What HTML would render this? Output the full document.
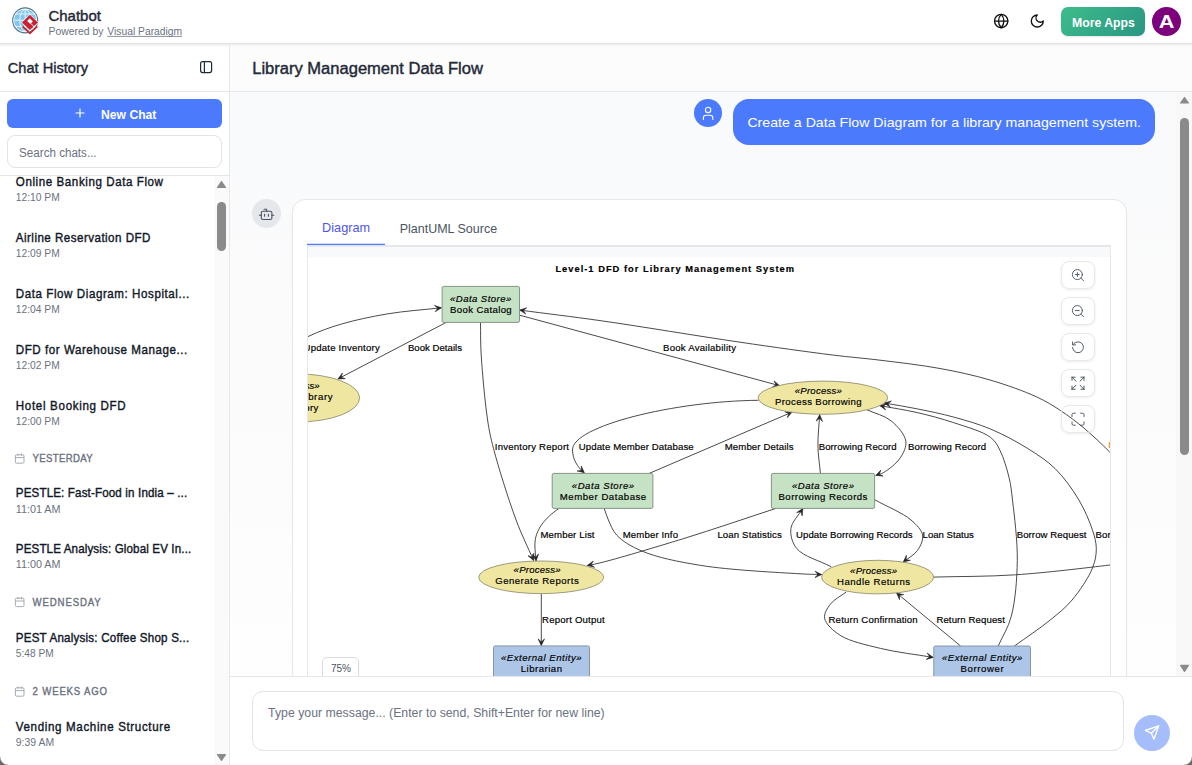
<!DOCTYPE html><html><head><meta charset="utf-8"><style>
html,body{margin:0;padding:0;}
body{width:1192px;height:765px;position:relative;overflow:hidden;background:#fff;font-family:"Liberation Sans", sans-serif;}
svg text{font-family:"Liberation Sans", sans-serif;}
</style></head><body>
<div style="position:absolute;left:0px;top:0px;width:1192px;height:43px;background:#fff;"></div>
<div style="position:absolute;left:0px;top:43px;width:1192px;height:1px;background:#e2e4e8;"></div>
<div style="position:absolute;left:0px;top:44px;width:1192px;height:3px;background:linear-gradient(#e9eaed,#f8f8f9 60%,#fcfcfd);"></div>
<div style="position:absolute;left:0px;top:47px;width:229px;height:718px;background:#fff;"></div>
<div style="position:absolute;left:229px;top:44px;width:1px;height:721px;background:#e5e7eb;"></div>
<div style="position:absolute;left:0px;top:91px;width:229px;height:1px;background:#e5e7eb;"></div>
<div style="position:absolute;left:7px;top:99px;width:215px;height:29px;background:#4b7bfc;border-radius:6px;"></div>
<div style="position:absolute;left:7px;top:135px;width:215px;height:33px;box-sizing:border-box;border:1px solid #e2e4e8;border-radius:8px;background:#fff;"></div>
<div style="position:absolute;left:0px;top:175px;width:229px;height:1px;background:#e5e7eb;"></div>
<div style="position:absolute;left:214px;top:176px;width:15px;height:589px;background:#fafafa;"></div>
<div style="position:absolute;left:217px;top:202px;width:9px;height:49px;background:#8a8a8a;border-radius:4.5px;"></div>
<div style="position:absolute;left:230px;top:47px;width:962px;height:44px;background:#fcfcfd;"></div>
<div style="position:absolute;left:230px;top:91px;width:962px;height:1px;background:#e5e7eb;"></div>
<div style="position:absolute;left:230px;top:92px;width:962px;height:584px;background:linear-gradient(180deg,#f9fafb 0%,#fbfbfc 50%,#fefefe 100%);"></div>
<div style="position:absolute;left:1176px;top:92px;width:16px;height:584px;background:#f8f8f8;"></div>
<div style="position:absolute;left:1180px;top:118px;width:9px;height:337px;background:#8a8a8a;border-radius:4.5px;"></div>
<div style="position:absolute;left:0;top:0;width:1192px;height:765px;clip-path:inset(92px 16px 89px 230px);">
<div style="position:absolute;left:694px;top:99px;width:28px;height:28px;background:#4b7bfc;border-radius:50%;"></div>
<div style="position:absolute;left:733px;top:99px;width:422px;height:46px;background:#4b7bfc;border-radius:16px;"></div>
<div style="position:absolute;left:252px;top:199px;width:29px;height:29px;background:#e5e7eb;border-radius:50%;"></div>
<div style="position:absolute;left:292px;top:199px;width:835px;height:560px;box-sizing:border-box;background:#fff;border:1px solid #e5e7eb;border-radius:13px;box-shadow:0 1px 2px rgba(0,0,0,0.03);"></div>
<div style="position:absolute;left:307px;top:245px;width:804px;height:500px;box-sizing:border-box;background:#fff;border:1px solid #e5e7eb;border-top:2px solid #e5e7eb;"></div>
<div style="position:absolute;left:308px;top:247px;width:802px;height:10px;background:#f8f9fb;"></div>
<div style="position:absolute;left:307px;top:244px;width:78px;height:1px;background:#4b7bfc;box-shadow:0 -0.5px 0 rgba(75,123,252,0.5);"></div>
</div>
<div style="position:absolute;left:230px;top:676px;width:962px;height:1px;background:#e5e7eb;"></div>
<div style="position:absolute;left:230px;top:677px;width:962px;height:88px;background:#fff;"></div>
<div style="position:absolute;left:252px;top:691px;width:872px;height:60px;box-sizing:border-box;border:1px solid #e2e4e8;border-radius:11px;background:#fff;"></div>
<div style="position:absolute;left:1134px;top:715px;width:36px;height:36px;background:#a5bdfb;border-radius:50%;"></div>
<div style="position:absolute;left:1061px;top:7px;width:84px;height:29px;background:linear-gradient(135deg,#3dbd8a,#2b9584);border-radius:7px;box-shadow:0 1px 2px rgba(0,0,0,0.1);"></div>
<div style="position:absolute;left:1152px;top:7px;width:29px;height:29px;background:#7d007d;border-radius:50%;"></div>
<svg style="position:absolute;left:0;top:0" width="1192" height="765" viewBox="0 0 1192 765">
<defs><clipPath id="dc"><rect x="308" y="257" width="802" height="419"/></clipPath></defs>
<g clip-path="url(#dc)">
<path d="M260.0,365.0 C275.9,355.6 292.9,343.8 307.7,336.7 C319.7,331.0 329.3,327.6 341.6,324.0 C355.6,319.9 371.4,316.6 387.4,313.9 C404.6,311.0 423.4,309.8 441.4,307.8" fill="none" stroke="#2b2b2b" stroke-width="0.85"/><polygon points="441.4,307.8 435.2,311.7 437.8,308.2 434.5,305.4" fill="#222" stroke="#222" stroke-width="0.6"/><path d="M446.0,322.5 L338.0,378.9" fill="none" stroke="#2b2b2b" stroke-width="0.85"/><polygon points="338.0,378.9 342.4,373.0 341.2,377.2 345.3,378.7" fill="#222" stroke="#222" stroke-width="0.6"/><path d="M519.7,315.2 L779.6,385.7" fill="none" stroke="#2b2b2b" stroke-width="0.85"/><polygon points="779.6,385.7 772.4,387.1 776.1,384.8 774.1,380.9" fill="#222" stroke="#222" stroke-width="0.6"/><path d="M1125.0,468.0 C1119.8,462.6 1115.4,457.6 1109.5,451.8 C1102.2,444.6 1092.7,435.4 1084.2,428.3 C1076.4,421.8 1068.6,415.9 1060.6,410.6 C1052.9,405.5 1046.5,401.5 1037.1,397.1 C1024.3,391.2 1006.1,384.7 990.0,380.0 C973.7,375.2 957.5,371.7 940.0,368.5 C921.0,365.0 898.8,362.5 880.0,360.2 C863.3,358.1 851.0,357.3 832.6,355.0 C806.8,351.8 774.0,347.2 740.0,342.2 C698.1,336.1 640.3,326.3 600.0,320.6 C569.6,316.3 546.5,313.6 519.7,310.1" fill="none" stroke="#2b2b2b" stroke-width="0.85"/><polygon points="519.7,310.1 526.7,307.8 523.3,310.6 525.8,314.1" fill="#222" stroke="#222" stroke-width="0.6"/><path d="M758.4,400.3 C675,401 572,426 572.5,450 C572.7,459 577,467 584.3,472.7" fill="none" stroke="#2b2b2b" stroke-width="0.85"/><polygon points="584.3,472.7 577.2,470.9 581.5,470.4 581.3,466.0" fill="#222" stroke="#222" stroke-width="0.6"/><path d="M649.2,473.4 L792.1,412.1" fill="none" stroke="#2b2b2b" stroke-width="0.85"/><polygon points="792.1,412.1 787.3,417.6 788.8,413.5 784.8,411.8" fill="#222" stroke="#222" stroke-width="0.6"/><path d="M820.4,473.4 C819.6,463.9 818.0,454.6 817.9,445.0 C817.8,435.1 819.1,424.8 819.7,414.7" fill="none" stroke="#2b2b2b" stroke-width="0.85"/><polygon points="819.7,414.7 822.5,421.5 819.5,418.3 816.1,421.1" fill="#222" stroke="#222" stroke-width="0.6"/><path d="M866.7,409.7 C874.8,413.4 884.5,415.4 891.1,420.8 C897.5,426.0 904.8,434.4 905.8,441.1 C906.7,446.7 903.6,452.8 900.3,457.8 C896.6,463.4 888.5,469.7 883.7,472.5 C880.8,474.2 878.4,474.4 875.8,475.4" fill="none" stroke="#2b2b2b" stroke-width="0.85"/><polygon points="875.8,475.4 880.9,470.1 879.2,474.2 883.1,476.1" fill="#222" stroke="#222" stroke-width="0.6"/><path d="M998.2,646.0 C1002.6,636.1 1008.2,628.0 1011.3,616.2 C1015.4,600.8 1017.0,579.4 1017.3,560.4 C1017.6,540.7 1014.2,515.1 1012.5,500.0 C1011.4,490.9 1011.0,485.7 1009.2,478.1 C1007.1,469.3 1003.7,457.7 1000.0,450.4 C997.3,445.0 995.6,441.3 990.7,437.5 C982.9,431.4 966.2,426.9 953.8,422.7 C941.6,418.6 929.3,415.4 916.9,412.5 C904.6,409.7 892.1,407.9 879.7,405.6" fill="none" stroke="#2b2b2b" stroke-width="0.85"/><polygon points="879.7,405.6 886.8,403.7 883.2,406.3 885.6,409.9" fill="#222" stroke="#222" stroke-width="0.6"/><path d="M1014.4,646.0 C1026.3,637.4 1039.7,628.6 1050.0,620.2 C1058.5,613.3 1065.4,608.0 1072.1,600.0 C1079.7,591.0 1088.6,577.7 1092.5,568.0 C1095.3,560.9 1096.4,554.7 1096.3,548.3 C1096.2,542.1 1094.7,536.9 1092.5,530.2 C1089.6,521.3 1084.7,509.8 1078.9,500.0 C1072.6,489.3 1064.2,477.6 1055.3,468.8 C1047.0,460.6 1037.8,454.8 1027.7,448.5 C1016.5,441.5 1003.3,434.4 990.7,429.1 C978.6,424.0 966.2,420.5 953.8,417.1 C941.6,413.7 928.8,411.2 916.9,408.8 C905.7,406.5 895.2,404.9 884.3,403.0" fill="none" stroke="#2b2b2b" stroke-width="0.85"/><polygon points="884.3,403.0 891.4,401.0 887.8,403.6 890.2,407.3" fill="#222" stroke="#222" stroke-width="0.6"/><path d="M558.8,508.6 C545,518 534.8,530 534.9,545 C535,551 535.6,556 536.1,560.8" fill="none" stroke="#2b2b2b" stroke-width="0.85"/><polygon points="536.1,560.8 532.2,554.6 535.7,557.2 538.6,553.9" fill="#222" stroke="#222" stroke-width="0.6"/><path d="M480.5,322.4 C480.7,333.3 480.4,342.3 481.2,355.0 C482.3,373.0 485.0,402.8 487.6,420.0 C489.3,431.5 490.5,436.9 493.5,448.5 C498.3,467.0 508.5,499.7 516.1,520.0 C521.9,535.6 527.8,547.0 533.6,560.5" fill="none" stroke="#2b2b2b" stroke-width="0.85"/><polygon points="533.6,560.5 528.0,555.7 532.2,557.2 533.9,553.2" fill="#222" stroke="#222" stroke-width="0.6"/><path d="M776.0,508.4 C745.3,518.4 714.0,529.2 683.9,538.5 C655.4,547.3 615.7,559.1 600.0,562.9 C594.0,564.4 591.6,564.6 587.4,565.4" fill="none" stroke="#2b2b2b" stroke-width="0.85"/><polygon points="587.4,565.4 593.3,561.0 590.9,564.7 594.5,567.3" fill="#222" stroke="#222" stroke-width="0.6"/><path d="M604.2,508.4 C605.6,512.3 606.6,515.9 608.4,520.0 C610.6,524.8 612.4,530.6 616.8,535.2 C622.5,541.3 631.4,546.6 642.0,551.1 C657.1,557.5 678.4,561.8 700.7,565.4 C729.3,570.1 778.9,572.5 800.0,573.8 C809.8,574.4 814.4,574.3 821.6,574.6" fill="none" stroke="#2b2b2b" stroke-width="0.85"/><polygon points="821.6,574.6 814.9,577.6 818.0,574.5 815.1,571.2" fill="#222" stroke="#222" stroke-width="0.6"/><path d="M831.2,566.7 C819.7,560.7 803.2,556.4 796.8,548.6 C792.1,542.9 790.1,535.0 790.9,528.5 C791.8,521.7 798.8,515.2 802.8,508.6" fill="none" stroke="#2b2b2b" stroke-width="0.85"/><polygon points="802.8,508.6 802.2,515.9 801.0,511.7 796.7,512.6" fill="#222" stroke="#222" stroke-width="0.6"/><path d="M874.6,499.7 C886.7,506.5 902.7,512.8 911.0,520.0 C916.6,524.9 921.7,529.9 922.6,535.2 C923.4,540.0 920.6,545.9 917.6,550.3 C914.4,555.0 908.1,558.1 903.3,562.0" fill="none" stroke="#2b2b2b" stroke-width="0.85"/><polygon points="903.3,562.0 906.4,555.3 906.1,559.7 910.4,560.3" fill="#222" stroke="#222" stroke-width="0.6"/><path d="M541.3,593.6 L541.3,645.5" fill="none" stroke="#2b2b2b" stroke-width="0.85"/><polygon points="541.3,645.5 538.1,638.9 541.3,641.9 544.5,638.9" fill="#222" stroke="#222" stroke-width="0.6"/><path d="M846.2,592.0 C841.0,596.0 834.1,599.3 830.5,604.0 C827.3,608.2 823.8,613.5 824.6,618.2 C825.6,624.0 833.0,630.7 840.2,635.3 C850.0,641.6 866.0,644.8 880.5,648.4 C896.8,652.4 915.6,654.4 933.2,657.4" fill="none" stroke="#2b2b2b" stroke-width="0.85"/><polygon points="933.2,657.4 926.2,659.4 929.7,656.8 927.2,653.1" fill="#222" stroke="#222" stroke-width="0.6"/><path d="M960.6,646.0 L896.6,593.0" fill="none" stroke="#2b2b2b" stroke-width="0.85"/><polygon points="896.6,593.0 903.7,594.7 899.4,595.3 899.6,599.7" fill="#222" stroke="#222" stroke-width="0.6"/><path d="M933.5,577.1 C960.8,576.3 987.2,576.7 1015.5,574.8 C1045.9,572.8 1087.3,567.7 1110.0,565.0 C1122.8,563.5 1130.0,562.3 1140.0,561.0" fill="none" stroke="#2b2b2b" stroke-width="0.85"/>
<rect x="442.1" y="286.4" width="77.4" height="36" rx="1.6" fill="#c5e2c4" stroke="#7c8a7d" stroke-width="0.9"/>
<ellipse cx="297" cy="397.95" rx="62.6" ry="24.1" fill="#efe7a1" stroke="#86846c" stroke-width="0.8"/>
<ellipse cx="822.9" cy="397.7" rx="64.8" ry="16.6" fill="#efe7a1" stroke="#86846c" stroke-width="0.8"/>
<rect x="552.2" y="473.4" width="100.7" height="35" rx="1.6" fill="#c5e2c4" stroke="#7c8a7d" stroke-width="0.9"/>
<rect x="771.4" y="473.4" width="103.2" height="35" rx="1.6" fill="#c5e2c4" stroke="#7c8a7d" stroke-width="0.9"/>
<ellipse cx="541.2" cy="577.3" rx="62.5" ry="16.3" fill="#efe7a1" stroke="#86846c" stroke-width="0.8"/>
<ellipse cx="877.6" cy="577.1" rx="56" ry="16.8" fill="#efe7a1" stroke="#86846c" stroke-width="0.8"/>
<rect x="493.5" y="645.9" width="96" height="40" rx="1.6" fill="#adc6e8" stroke="#7d8ca3" stroke-width="0.9"/>
<rect x="933.8" y="646" width="96.7" height="40" rx="1.6" fill="#adc6e8" stroke="#7d8ca3" stroke-width="0.9"/>
<g stroke="#000" stroke-width="0.18"><text x="450.0" y="302.1" font-size="9.6" fill="#000" font-weight="normal" font-style="italic" text-anchor="start" textLength="61.3" lengthAdjust="spacing">«Data Store»</text><text x="450.0" y="312.6" font-size="9.6" fill="#000" font-weight="normal" font-style="normal" text-anchor="start" textLength="61.7" lengthAdjust="spacing">Book Catalog</text><text x="274.5" y="388.6" font-size="9.6" fill="#000" font-weight="normal" font-style="italic" text-anchor="start" textLength="45.0" lengthAdjust="spacing">«Process»</text><text x="261.5" y="399.6" font-size="9.6" fill="#000" font-weight="normal" font-style="normal" text-anchor="start" textLength="71.0" lengthAdjust="spacing">Update Library</text><text x="275.7" y="411.3" font-size="9.6" fill="#000" font-weight="normal" font-style="normal" text-anchor="start" textLength="42.6" lengthAdjust="spacing">Inventory</text><text x="794.7" y="393.5" font-size="9.6" fill="#000" font-weight="normal" font-style="italic" text-anchor="start" textLength="47.2" lengthAdjust="spacing">«Process»</text><text x="775.0" y="404.9" font-size="9.6" fill="#000" font-weight="normal" font-style="normal" text-anchor="start" textLength="86.6" lengthAdjust="spacing">Process Borrowing</text><text x="571.8" y="488.8" font-size="9.6" fill="#000" font-weight="normal" font-style="italic" text-anchor="start" textLength="62.3" lengthAdjust="spacing">«Data Store»</text><text x="559.8" y="499.7" font-size="9.6" fill="#000" font-weight="normal" font-style="normal" text-anchor="start" textLength="86.4" lengthAdjust="spacing">Member Database</text><text x="791.9" y="488.8" font-size="9.6" fill="#000" font-weight="normal" font-style="italic" text-anchor="start" textLength="62.1" lengthAdjust="spacing">«Data Store»</text><text x="778.5" y="499.7" font-size="9.6" fill="#000" font-weight="normal" font-style="normal" text-anchor="start" textLength="88.9" lengthAdjust="spacing">Borrowing Records</text><text x="513.6" y="572.9" font-size="9.6" fill="#000" font-weight="normal" font-style="italic" text-anchor="start" textLength="47.0" lengthAdjust="spacing">«Process»</text><text x="495.2" y="583.8" font-size="9.6" fill="#000" font-weight="normal" font-style="normal" text-anchor="start" textLength="83.5" lengthAdjust="spacing">Generate Reports</text><text x="850.1" y="573.8" font-size="9.6" fill="#000" font-weight="normal" font-style="italic" text-anchor="start" textLength="47.0" lengthAdjust="spacing">«Process»</text><text x="837.0" y="584.7" font-size="9.6" fill="#000" font-weight="normal" font-style="normal" text-anchor="start" textLength="73.0" lengthAdjust="spacing">Handle Returns</text><text x="501.0" y="661.0" font-size="9.6" fill="#000" font-weight="normal" font-style="italic" text-anchor="start" textLength="80.6" lengthAdjust="spacing">«External Entity»</text><text x="520.8" y="672.0" font-size="9.6" fill="#000" font-weight="normal" font-style="normal" text-anchor="start" textLength="41.2" lengthAdjust="spacing">Librarian</text><text x="941.9" y="661.3" font-size="9.6" fill="#000" font-weight="normal" font-style="italic" text-anchor="start" textLength="80.5" lengthAdjust="spacing">«External Entity»</text><text x="960.6" y="672.0" font-size="9.6" fill="#000" font-weight="normal" font-style="normal" text-anchor="start" textLength="43.0" lengthAdjust="spacing">Borrower</text><text x="303.5" y="350.5" font-size="9.6" fill="#000" font-weight="normal" font-style="normal" text-anchor="start" textLength="76.2" lengthAdjust="spacing">Update Inventory</text><text x="407.9" y="350.5" font-size="9.6" fill="#000" font-weight="normal" font-style="normal" text-anchor="start" textLength="54.1" lengthAdjust="spacing">Book Details</text><text x="663.0" y="350.6" font-size="9.6" fill="#000" font-weight="normal" font-style="normal" text-anchor="start" textLength="73.0" lengthAdjust="spacing">Book Availability</text><text x="494.8" y="449.9" font-size="9.6" fill="#000" font-weight="normal" font-style="normal" text-anchor="start" textLength="74.2" lengthAdjust="spacing">Inventory Report</text><text x="578.7" y="449.9" font-size="9.6" fill="#000" font-weight="normal" font-style="normal" text-anchor="start" textLength="115.0" lengthAdjust="spacing">Update Member Database</text><text x="724.7" y="449.9" font-size="9.6" fill="#000" font-weight="normal" font-style="normal" text-anchor="start" textLength="68.8" lengthAdjust="spacing">Member Details</text><text x="818.7" y="449.9" font-size="9.6" fill="#000" font-weight="normal" font-style="normal" text-anchor="start" textLength="78.0" lengthAdjust="spacing">Borrowing Record</text><text x="908.0" y="449.8" font-size="9.6" fill="#000" font-weight="normal" font-style="normal" text-anchor="start" textLength="78.1" lengthAdjust="spacing">Borrowing Record</text><text x="540.5" y="537.7" font-size="9.6" fill="#000" font-weight="normal" font-style="normal" text-anchor="start" textLength="54.0" lengthAdjust="spacing">Member List</text><text x="622.7" y="537.7" font-size="9.6" fill="#000" font-weight="normal" font-style="normal" text-anchor="start" textLength="55.3" lengthAdjust="spacing">Member Info</text><text x="717.4" y="537.7" font-size="9.6" fill="#000" font-weight="normal" font-style="normal" text-anchor="start" textLength="64.3" lengthAdjust="spacing">Loan Statistics</text><text x="796.0" y="537.7" font-size="9.6" fill="#000" font-weight="normal" font-style="normal" text-anchor="start" textLength="116.6" lengthAdjust="spacing">Update Borrowing Records</text><text x="922.6" y="537.7" font-size="9.6" fill="#000" font-weight="normal" font-style="normal" text-anchor="start" textLength="51.2" lengthAdjust="spacing">Loan Status</text><text x="1016.7" y="537.8" font-size="9.6" fill="#000" font-weight="normal" font-style="normal" text-anchor="start" textLength="69.8" lengthAdjust="spacing">Borrow Request</text><text x="1095.5" y="537.8" font-size="9.6" fill="#000" font-weight="normal" font-style="normal" text-anchor="start" textLength="90.0" lengthAdjust="spacing">Borrow Confirmation</text><text x="542.1" y="622.7" font-size="9.6" fill="#000" font-weight="normal" font-style="normal" text-anchor="start" textLength="62.6" lengthAdjust="spacing">Report Output</text><text x="828.5" y="623.2" font-size="9.6" fill="#000" font-weight="normal" font-style="normal" text-anchor="start" textLength="89.2" lengthAdjust="spacing">Return Confirmation</text><text x="936.4" y="623.2" font-size="9.6" fill="#000" font-weight="normal" font-style="normal" text-anchor="start" textLength="68.5" lengthAdjust="spacing">Return Request</text><text x="555.4" y="271.8" font-size="9.3" fill="#000" font-weight="bold" font-style="normal" text-anchor="start" textLength="238.6" lengthAdjust="spacing">Level-1 DFD for Library Management System</text></g>
<rect x="1108.6" y="442" width="1.6" height="6" fill="#f2a65a"/>
</g></svg>
<div style="position:absolute;left:1061px;top:261px;width:34px;height:28px;box-sizing:border-box;background:transparent;border:1px solid #e6e8ec;border-radius:8px;box-shadow:0 1px 3px rgba(0,0,0,0.08);"></div>
<div style="position:absolute;left:1061px;top:297px;width:34px;height:28px;box-sizing:border-box;background:transparent;border:1px solid #e6e8ec;border-radius:8px;box-shadow:0 1px 3px rgba(0,0,0,0.08);"></div>
<div style="position:absolute;left:1061px;top:333px;width:34px;height:28px;box-sizing:border-box;background:transparent;border:1px solid #e6e8ec;border-radius:8px;box-shadow:0 1px 3px rgba(0,0,0,0.08);"></div>
<div style="position:absolute;left:1061px;top:369px;width:34px;height:28px;box-sizing:border-box;background:transparent;border:1px solid #e6e8ec;border-radius:8px;box-shadow:0 1px 3px rgba(0,0,0,0.08);"></div>
<div style="position:absolute;left:1061px;top:405px;width:34px;height:28px;box-sizing:border-box;background:transparent;border:1px solid #e6e8ec;border-radius:8px;box-shadow:0 1px 3px rgba(0,0,0,0.08);"></div>
<div style="position:absolute;left:0;top:0;width:1192px;height:765px;clip-path:inset(0 0 89px 0);">
<div style="position:absolute;left:322px;top:657px;width:37px;height:30px;box-sizing:border-box;background:#fff;border:1px solid #d9dce2;border-radius:5px;box-shadow:0 1px 2px rgba(0,0,0,0.05);"></div>
</div>
<svg style="position:absolute;left:0;top:0" width="1192" height="765" viewBox="0 0 1192 765"><g><circle cx="25.2" cy="20.4" r="12.5" fill="#fff" stroke="#4f7886" stroke-width="1.1"/><circle cx="25.2" cy="20.4" r="11" fill="#7fc6f1"/><g stroke="#fff" stroke-width="0.8" fill="none"><path d="M15.5,14 H35 M14.2,20.2 H36.2 M15.5,26.4 H35 M25.2,9.4 V31.4"/><ellipse cx="25.2" cy="20.4" rx="5.4" ry="11"/></g><polygon points="29.9,14.0 38.6,22.4 29.9,30.8 21.2,22.4" fill="#fff"/><polygon points="29.9,14.8 37.9,22.4 29.9,30.1 21.9,22.4" fill="#c8212f"/><polygon points="27.2,20.9 29.7,18.3 32.8,21.5 30.3,24" fill="#fff"/><path d="M30.8,23.4 L34.2,27" stroke="#fff" stroke-width="0.9"/><path d="M22.6,26.4 L29.9,33.4 L37.3,26.3" fill="none" stroke="#c8212f" stroke-width="1.7"/></g><text x="48.4" y="20.6" font-size="14" fill="#1f2937" font-weight="normal" font-style="normal" text-anchor="start" textLength="52.5" lengthAdjust="spacingAndGlyphs" stroke="#1f2937" stroke-width="0.4" >Chatbot</text><text x="48.6" y="34.7" font-size="10.2" fill="#6b7280" font-weight="normal" font-style="normal" text-anchor="start" textLength="54.9" lengthAdjust="spacingAndGlyphs">Powered by</text><text x="107.3" y="34.7" font-size="10.2" fill="#6b7280" font-weight="normal" font-style="normal" text-anchor="start" textLength="74.9" lengthAdjust="spacingAndGlyphs">Visual Paradigm</text><rect x="107.3" y="35.9" width="74.9" height="0.8" fill="#6b7280"/><g transform="translate(993.2,13.05) scale(0.6667)" fill="none" stroke="#111" stroke-width="2" stroke-linecap="round" stroke-linejoin="round"><circle cx="12" cy="12" r="10"/><path d="M12 2a14.5 14.5 0 0 0 0 20 14.5 14.5 0 0 0 0-20"/><path d="M2 12h20"/></g><g transform="translate(1029.3,13) scale(0.6667)" fill="none" stroke="#111" stroke-width="2" stroke-linecap="round" stroke-linejoin="round"><path d="M12 3a6 6 0 0 0 9 9 9 9 0 1 1-9-9Z"/></g><text x="1072.1" y="26.7" font-size="12.3" fill="#fff" font-weight="bold" font-style="normal" text-anchor="start" textLength="62.6" lengthAdjust="spacingAndGlyphs">More Apps</text><text x="1166.6" y="28.2" font-size="18" fill="#fff" font-weight="bold" font-style="normal" text-anchor="middle" textLength="15.7" lengthAdjust="spacingAndGlyphs">A</text><text x="7.8" y="72.6" font-size="14" fill="#1f2937" font-weight="normal" font-style="normal" text-anchor="start" textLength="80.3" lengthAdjust="spacingAndGlyphs" stroke="#1f2937" stroke-width="0.4" >Chat History</text><g fill="none" stroke="#1f2937" stroke-width="1.2"><rect x="200.6" y="61.6" width="11" height="11" rx="2"/><path d="M204.4,61.6 V72.6"/></g><path d="M80,108.5 V117.5 M75.5,113 H84.5" stroke="#fff" stroke-width="1.2" fill="none"/><text x="101.1" y="118.8" font-size="12.4" fill="#fff" font-weight="bold" font-style="normal" text-anchor="start" textLength="55.3" lengthAdjust="spacingAndGlyphs">New Chat</text><text x="19.1" y="156.7" font-size="12" fill="#6b7280" font-weight="normal" font-style="normal" text-anchor="start" textLength="77.5" lengthAdjust="spacingAndGlyphs">Search chats...</text><g fill="#8a8a8a" stroke="#8a8a8a" stroke-width="1.2" stroke-linejoin="round"><polygon points="217.6,187.4 225.4,187.4 221.5,181.6"/><polygon points="217.6,754.6 225.4,754.6 221.5,760.4"/><polygon points="1180.6,103 1188.4,103 1184.5,97.6"/><polygon points="1180.6,665.4 1188.4,665.4 1184.5,671.4"/></g><g clip-path="url(#sbclip)"><defs><clipPath id="sbclip"><rect x="0" y="176" width="214" height="589"/></clipPath></defs><g transform="translate(15.8,185.7) scale(0.92,1)"><text x="0.0" y="0.0" font-size="12.6" fill="#111827" font-weight="normal" font-style="normal" text-anchor="start" textLength="160.0" lengthAdjust="spacing" stroke="#111827" stroke-width="0.4" >Online Banking Data Flow</text></g><text x="15.8" y="200.8" font-size="10.4" fill="#6b7280" font-weight="normal" font-style="normal" text-anchor="start" textLength="44.0" lengthAdjust="spacingAndGlyphs">12:10 PM</text><g transform="translate(15.8,241.6) scale(0.92,1)"><text x="0.0" y="0.0" font-size="12.6" fill="#111827" font-weight="normal" font-style="normal" text-anchor="start" textLength="146.3" lengthAdjust="spacing" stroke="#111827" stroke-width="0.4" >Airline Reservation DFD</text></g><text x="15.8" y="256.7" font-size="10.4" fill="#6b7280" font-weight="normal" font-style="normal" text-anchor="start" textLength="44.0" lengthAdjust="spacingAndGlyphs">12:09 PM</text><g transform="translate(15.8,297.8) scale(0.92,1)"><text x="0.0" y="0.0" font-size="12.6" fill="#111827" font-weight="normal" font-style="normal" text-anchor="start" textLength="188.6" lengthAdjust="spacing" stroke="#111827" stroke-width="0.4" >Data Flow Diagram: Hospital...</text></g><text x="15.8" y="312.9" font-size="10.4" fill="#6b7280" font-weight="normal" font-style="normal" text-anchor="start" textLength="44.0" lengthAdjust="spacingAndGlyphs">12:04 PM</text><g transform="translate(15.8,353.7) scale(0.92,1)"><text x="0.0" y="0.0" font-size="12.6" fill="#111827" font-weight="normal" font-style="normal" text-anchor="start" textLength="186.4" lengthAdjust="spacing" stroke="#111827" stroke-width="0.4" >DFD for Warehouse Manage...</text></g><text x="15.8" y="368.8" font-size="10.4" fill="#6b7280" font-weight="normal" font-style="normal" text-anchor="start" textLength="44.0" lengthAdjust="spacingAndGlyphs">12:02 PM</text><g transform="translate(15.8,409.5) scale(0.92,1)"><text x="0.0" y="0.0" font-size="12.6" fill="#111827" font-weight="normal" font-style="normal" text-anchor="start" textLength="119.5" lengthAdjust="spacing" stroke="#111827" stroke-width="0.4" >Hotel Booking DFD</text></g><text x="15.8" y="424.6" font-size="10.4" fill="#6b7280" font-weight="normal" font-style="normal" text-anchor="start" textLength="44.0" lengthAdjust="spacingAndGlyphs">12:00 PM</text><g transform="translate(15.8,497.4) scale(0.92,1)"><text x="0.0" y="0.0" font-size="12.6" fill="#111827" font-weight="normal" font-style="normal" text-anchor="start" textLength="186.3" lengthAdjust="spacing" stroke="#111827" stroke-width="0.4" >PESTLE: Fast-Food in India – ...</text></g><text x="15.8" y="512.5" font-size="10.4" fill="#6b7280" font-weight="normal" font-style="normal" text-anchor="start" textLength="44.7" lengthAdjust="spacingAndGlyphs">11:01 AM</text><g transform="translate(15.8,553.3) scale(0.92,1)"><text x="0.0" y="0.0" font-size="12.6" fill="#111827" font-weight="normal" font-style="normal" text-anchor="start" textLength="190.7" lengthAdjust="spacing" stroke="#111827" stroke-width="0.4" >PESTLE Analysis: Global EV In...</text></g><text x="15.8" y="568.4" font-size="10.4" fill="#6b7280" font-weight="normal" font-style="normal" text-anchor="start" textLength="44.7" lengthAdjust="spacingAndGlyphs">11:00 AM</text><g transform="translate(15.8,642.2) scale(0.92,1)"><text x="0.0" y="0.0" font-size="12.6" fill="#111827" font-weight="normal" font-style="normal" text-anchor="start" textLength="188.5" lengthAdjust="spacing" stroke="#111827" stroke-width="0.4" >PEST Analysis: Coffee Shop S...</text></g><text x="15.8" y="657.3" font-size="10.4" fill="#6b7280" font-weight="normal" font-style="normal" text-anchor="start" textLength="37.9" lengthAdjust="spacingAndGlyphs">5:48 PM</text><g transform="translate(15.8,730.9) scale(0.92,1)"><text x="0.0" y="0.0" font-size="12.6" fill="#111827" font-weight="normal" font-style="normal" text-anchor="start" textLength="167.9" lengthAdjust="spacing" stroke="#111827" stroke-width="0.4" >Vending Machine Structure</text></g><text x="15.8" y="746.0" font-size="10.4" fill="#6b7280" font-weight="normal" font-style="normal" text-anchor="start" textLength="38.3" lengthAdjust="spacingAndGlyphs">9:39 AM</text><g transform="translate(32.6,462.2) scale(0.86,1)"><text x="0.0" y="0.0" font-size="11.2" fill="#6b7280" font-weight="normal" font-style="normal" text-anchor="start" textLength="69.8" lengthAdjust="spacing" stroke="#6b7280" stroke-width="0.4" >YESTERDAY</text></g><g fill="none" stroke="#9ca3af" stroke-width="0.9"><rect x="15.4" y="454.8" width="8.6" height="8.4" rx="1.2"/><path d="M15.4,457.6 H24 M17.9,453.6 V455.8 M21.5,453.6 V455.8"/></g><g transform="translate(32.6,605.6) scale(0.86,1)"><text x="0.0" y="0.0" font-size="11.2" fill="#6b7280" font-weight="normal" font-style="normal" text-anchor="start" textLength="79.2" lengthAdjust="spacing" stroke="#6b7280" stroke-width="0.4" >WEDNESDAY</text></g><g fill="none" stroke="#9ca3af" stroke-width="0.9"><rect x="15.4" y="598.2" width="8.6" height="8.4" rx="1.2"/><path d="M15.4,601.0 H24 M17.9,597.0 V599.2 M21.5,597.0 V599.2"/></g><g transform="translate(32.6,695.2) scale(0.86,1)"><text x="0.0" y="0.0" font-size="11.2" fill="#6b7280" font-weight="normal" font-style="normal" text-anchor="start" textLength="86.6" lengthAdjust="spacing" stroke="#6b7280" stroke-width="0.4" >2 WEEKS AGO</text></g><g fill="none" stroke="#9ca3af" stroke-width="0.9"><rect x="15.4" y="687.8" width="8.6" height="8.4" rx="1.2"/><path d="M15.4,690.6 H24 M17.9,686.6 V688.8 M21.5,686.6 V688.8"/></g></g><text x="252.2" y="73.7" font-size="15.8" fill="#1f2937" font-weight="normal" font-style="normal" text-anchor="start" textLength="230.7" lengthAdjust="spacingAndGlyphs" stroke="#1f2937" stroke-width="0.4" >Library Management Data Flow</text><g transform="translate(700,105.2) scale(0.675)" fill="none" stroke="#fff" stroke-width="1.6" stroke-linecap="round" stroke-linejoin="round"><path d="M19 21v-2a4 4 0 0 0-4-4H9a4 4 0 0 0-4 4v2"/><circle cx="12" cy="7" r="4"/></g><text x="747.4" y="126.7" font-size="13.6" fill="#fff" font-weight="normal" font-style="normal" text-anchor="start" textLength="393.5" lengthAdjust="spacingAndGlyphs">Create a Data Flow Diagram for a library management system.</text><g fill="none" stroke="#4b5563" stroke-width="1.1" stroke-linecap="round" stroke-linejoin="round"><rect x="261.3" y="211.2" width="10.6" height="8.3" rx="1.6"/><path d="M266.6,211.2 V209.2 H264.1"/><path d="M259.4,215.3 H261.3 M271.9,215.3 H273.8"/><path d="M264.6,214.2 V216.3 M268.4,214.2 V216.3"/></g><text x="322.1" y="232.3" font-size="13" fill="#4f55ec" font-weight="normal" font-style="normal" text-anchor="start" textLength="48.0" lengthAdjust="spacingAndGlyphs">Diagram</text><text x="399.7" y="233.0" font-size="12.6" fill="#4b5563" font-weight="normal" font-style="normal" text-anchor="start" textLength="97.4" lengthAdjust="spacingAndGlyphs">PlantUML Source</text><g transform="translate(1070.5,267.7) scale(0.625)" fill="none" stroke="#4b5563" stroke-width="1.5" stroke-linecap="round" stroke-linejoin="round"><path d="M19 11a8 8 0 1 1-16 0 8 8 0 0 1 16 0Z"/><path d="m21 21-4.35-4.35"/><path d="M11 8v6"/><path d="M8 11h6"/></g><g transform="translate(1070.5,303.7) scale(0.625)" fill="none" stroke="#4b5563" stroke-width="1.5" stroke-linecap="round" stroke-linejoin="round"><path d="M19 11a8 8 0 1 1-16 0 8 8 0 0 1 16 0Z"/><path d="m21 21-4.35-4.35"/><path d="M8 11h6"/></g><g transform="translate(1070.8,340.1) scale(0.6)" fill="none" stroke="#4b5563" stroke-width="1.6" stroke-linecap="round" stroke-linejoin="round"><path d="M3 12a9 9 0 1 0 9-9 9.75 9.75 0 0 0-6.74 2.74L3 8"/><path d="M3 3v5h5"/></g><g transform="translate(1070,375.2) scale(0.667)" fill="none" stroke="#4b5563" stroke-width="1.45" stroke-linecap="round" stroke-linejoin="round"><path d="m21 21-6-6m6 6v-4.8m0 4.8h-4.8"/><path d="M3 16.2V21m0 0h4.8M3 21l6-6"/><path d="M21 7.8V3m0 0h-4.8M21 3l-6 6"/><path d="M3 7.8V3m0 0h4.8M3 3l6 6"/></g><g transform="translate(1070,411.2) scale(0.667)" fill="none" stroke="#4b5563" stroke-width="1.45" stroke-linecap="round" stroke-linejoin="round"><path d="M8 3H5a2 2 0 0 0-2 2v3"/><path d="M21 8V5a2 2 0 0 0-2-2h-3"/><path d="M3 16v3a2 2 0 0 0 2 2h3"/><path d="M16 21h3a2 2 0 0 0 2-2v-3"/></g><text x="330.9" y="671.9" font-size="10.8" fill="#4b5563" font-weight="normal" font-style="normal" text-anchor="start" textLength="20.1" lengthAdjust="spacingAndGlyphs">75%</text><text x="268.1" y="717.2" font-size="12.5" fill="#6b7280" font-weight="normal" font-style="normal" text-anchor="start" textLength="336.6" lengthAdjust="spacingAndGlyphs">Type your message... (Enter to send, Shift+Enter for new line)</text><g transform="translate(1144,724.5) scale(0.6667)" fill="none" stroke="#fff" stroke-width="2" stroke-linecap="round" stroke-linejoin="round"><path d="m22 2-7 20-4-9-9-4Z"/><path d="M22 2 11 13"/></g></svg>
<div style="position:absolute;left:0px;top:757px;width:8px;height:8px;background:radial-gradient(circle at 8px 0px, rgba(0,0,0,0) 7px, #6a6a6a 8.5px);"></div>
<div style="position:absolute;left:1184px;top:757px;width:8px;height:8px;background:radial-gradient(circle at 0px 0px, rgba(0,0,0,0) 7px, #6a6a6a 8.5px);"></div>
</body></html>
